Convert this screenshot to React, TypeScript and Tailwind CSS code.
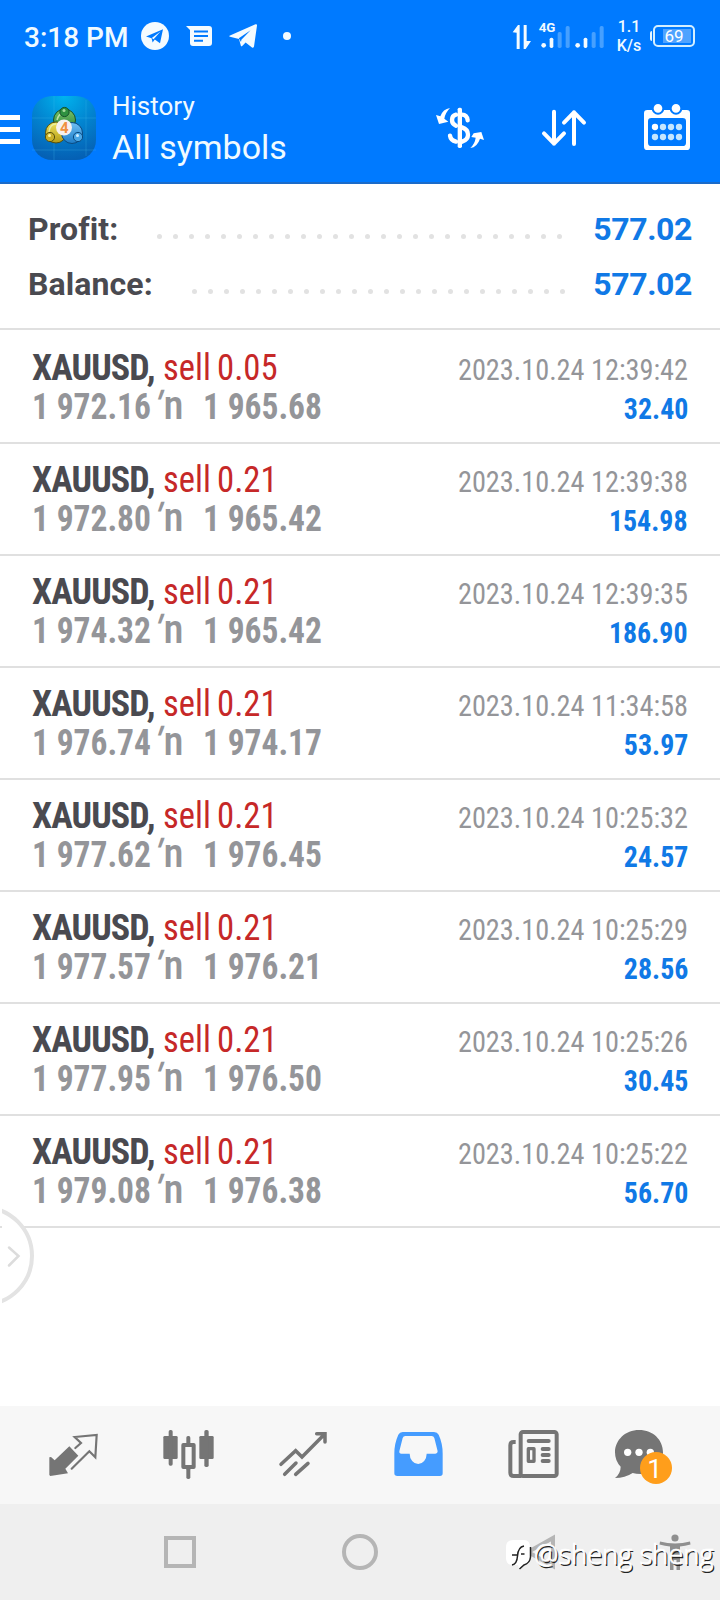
import React from "react";

interface Deal {
  volume: string;
  open: string;
  close: string;
  time: string;
  profit: string;
}

const deals: Deal[] = [
  { volume: "0.05", open: "1 972.16", close: "1 965.68", time: "2023.10.24 12:39:42", profit: "32.40" },
  { volume: "0.21", open: "1 972.80", close: "1 965.42", time: "2023.10.24 12:39:38", profit: "154.98" },
  { volume: "0.21", open: "1 974.32", close: "1 965.42", time: "2023.10.24 12:39:35", profit: "186.90" },
  { volume: "0.21", open: "1 976.74", close: "1 974.17", time: "2023.10.24 11:34:58", profit: "53.97" },
  { volume: "0.21", open: "1 977.62", close: "1 976.45", time: "2023.10.24 10:25:32", profit: "24.57" },
  { volume: "0.21", open: "1 977.57", close: "1 976.21", time: "2023.10.24 10:25:29", profit: "28.56" },
  { volume: "0.21", open: "1 977.95", close: "1 976.50", time: "2023.10.24 10:25:26", profit: "30.45" },
  { volume: "0.21", open: "1 979.08", close: "1 976.38", time: "2023.10.24 10:25:22", profit: "56.70" },
];

const StatusBar = () => (
  <div className="flex h-[72px] items-center text-[#f0faff]">
    <span className="ml-6 w-[105px] pt-[3px] whitespace-nowrap text-[28px] leading-none font-medium">3:18 PM</span>
    <svg className="ml-3 h-7 w-7" viewBox="0 0 28 28">
      <circle cx="14" cy="14" r="14" fill="#f4fbff" />
      <path d="M5 14.6 22 7.2 19 21.2 13.8 17.6 11.6 20.6 10.6 16.2Z" fill="#007aff" />
      <path d="M10.8 16 19.5 9.5 12.6 17.2" fill="#f4fbff" />
    </svg>
    <svg className="ml-[17px] h-[20px] w-[26px]" viewBox="0 0 26 20">
      <path d="M0 0H23Q26 0 26 3V17Q26 20 23 20H7Q4 20 4 17V4Z" fill="#f4fbff" />
      <path d="M8 5.5H22M8 10H22M8 14.8H17" stroke="#007aff" strokeWidth="2" />
    </svg>
    <svg className="ml-[17px] h-6 w-7" viewBox="0 0 28 24">
      <path d="M1 11.5 26.5.3Q28.2-.2 28 1.6L25 22.6Q24.6 24.4 23 23.4L16.6 18.6 13.2 22Q12 22.8 11.8 21.4L10 15 1 12.8Q-.4 12.2 1 11.5Z" fill="#f4fbff" />
      <path d="M9.8 14.2 21.6 6.2 12.4 15.8 12 18" fill="#007aff" />
    </svg>
    <div className="ml-[26px] h-2 w-2 rounded-full bg-[#f4fbff]" />

    <svg className="ml-auto h-[36px] w-[94px]" viewBox="460 54 282 108">
      <g fill="#f4fbff">
        <path d="M462 97 478 75H483V147H474V98ZM495 75H504V123H517L501 147H495Z" />
        <circle cx="555" cy="136" r="7" />
        <rect x="573" y="113" width="11" height="31" rx="5" />
        <circle cx="657" cy="136" r="7" />
        <rect x="675" y="113" width="11" height="31" rx="5" />
      </g>
      <g fill="#46a0ff">
        <rect x="597" y="96" width="12" height="48" rx="5" />
        <rect x="621" y="78" width="12" height="66" rx="5" />
        <rect x="699" y="96" width="12" height="48" rx="5" />
        <rect x="723" y="78" width="12" height="66" rx="5" />
      </g>
      <text x="540" y="95" className="font-[Roboto] text-[40px] font-bold" fill="#f0faff">4G</text>
    </svg>
    <div className="ml-[8px] w-[30px] text-center text-[16px] leading-[19px] font-medium whitespace-nowrap">
      <div>1.1</div>
      <div>K/s</div>
    </div>
    <svg className="mr-[24px] ml-[5px] h-[24px] w-[47px]" viewBox="0 0 47 24">
      <path d="M3 7Q1 7 1 9V15Q1 17 3 17Z" fill="#e6f6ff" />
      <rect x="5" y="2" width="40" height="20" rx="4" fill="none" stroke="#d4efff" strokeWidth="2" />
      <rect x="14" y="5" width="28" height="14" fill="#4fa3ff" />
      <text x="15.5" y="18.2" className="font-[Roboto] text-[17px]" fill="#fff">69</text>
    </svg>
  </div>
);

const AppLogo = () => (
  <svg className="mt-[2px] ml-3 h-16 w-16" viewBox="0 0 64 64">
    <defs>
      <radialGradient id="bg" cx="0.5" cy="0" r="1">
        <stop offset="0" stopColor="#00b4ee" />
        <stop offset="0.5" stopColor="#0284d0" />
        <stop offset="1" stopColor="#0560b4" />
      </radialGradient>
      <linearGradient id="green" x1="0" y1="0" x2="0" y2="1">
        <stop offset="0" stopColor="#7dc46a" />
        <stop offset="1" stopColor="#1f7f35" />
      </linearGradient>
      <linearGradient id="gold" x1="0" y1="0" x2="0" y2="1">
        <stop offset="0" stopColor="#f0e55c" />
        <stop offset="1" stopColor="#b39a15" />
      </linearGradient>
      <linearGradient id="sky" x1="0" y1="0" x2="0" y2="1">
        <stop offset="0" stopColor="#6fc0f4" />
        <stop offset="1" stopColor="#1c7cc8" />
      </linearGradient>
    </defs>
    <rect width="64" height="64" rx="20" fill="url(#bg)" />
    <path d="M22 0V64M54 4V60M0 22H64M0 54H64" stroke="#4dc0ee" strokeOpacity="0.25" strokeWidth="1" />
    <circle cx="32.5" cy="24" r="11" fill="url(#green)" stroke="#14502a" strokeWidth="1" />
    <circle cx="24" cy="36.5" r="10.5" fill="url(#gold)" stroke="#55500f" strokeWidth="1" />
    <circle cx="40" cy="37" r="10.5" fill="url(#sky)" stroke="#0b4a80" strokeWidth="1" />
    <path d="M25 24Q27 16 33 17M17 36Q18 28 24 28" stroke="#e9f7c8" strokeOpacity="0.7" strokeWidth="1.5" fill="none" />
    <circle cx="32.5" cy="16" r="4.6" fill="#2f9140" stroke="#14502a" strokeWidth="1" />
    <circle cx="18" cy="41" r="4.6" fill="#c9b02a" stroke="#55500f" strokeWidth="1" />
    <circle cx="46" cy="41" r="4.6" fill="#49a6e6" stroke="#0b4a80" strokeWidth="1" />
    <circle cx="32" cy="14.5" r="1.5" fill="#a7dc9c" />
    <circle cx="17.5" cy="39.5" r="1.5" fill="#fff6a0" />
    <circle cx="45.5" cy="39.5" r="1.5" fill="#d4efff" />
    <circle cx="32" cy="31.5" r="8" fill="#f6f1ee" />
    <text x="28" y="37" className="font-[Roboto] text-[15px] font-bold" fill="#f09040">4</text>
  </svg>
);

const AppBar = () => (
  <div className="flex h-[110px] items-center text-[#f0faff]">
    <div className="flex w-5 flex-col gap-[7px] pt-[5px]">
      <div className="h-[5px] bg-white" />
      <div className="h-[5px] bg-white" />
      <div className="h-[5px] bg-white" />
    </div>
    <AppLogo />
    <div className="ml-4 whitespace-nowrap">
      <div className="text-[26px] leading-[40px]">History</div>
      <div className="text-[34px] leading-[42px]">All symbols</div>
    </div>
    <svg className="mt-[2px] ml-auto h-12 w-12" viewBox="228 312 144 144" fill="none">
      <rect x="293" y="323" width="13" height="121" rx="5" fill="#fff" />
      <path d="M323 361Q321 344 306 344M288 344Q276 347 276 360Q276 372 288 377M306 382Q324 388 324 404Q324 419 306 425M288 425Q272 421 270 407" stroke="#fff" strokeWidth="13" strokeLinecap="round" />
      <path d="M270 324Q249 327 241 349L228 345 237 372 265 365 253 356Q256 338 270 324ZM331 444Q352 441 360 416L372 420 364 396 341 400 334 411 347 413Q345 430 331 444Z" fill="#fff" />
    </svg>
    <svg className="mt-[2px] ml-14 h-12 w-12" viewBox="540 312 144 144" fill="none" stroke="#fff" strokeWidth="12" strokeLinecap="round" strokeLinejoin="round">
      <path d="M582 335V431M552 400 582 431 612 400M642 432V337M612 368 642 337 672 368" />
    </svg>
    <svg className="mt-[2px] mr-[29px] ml-[55px] h-12 w-12" viewBox="849 312 144 144">
      <path fillRule="evenodd" d="M862 330H980Q990 330 990 340V440Q990 450 980 450H862Q852 450 852 440V340Q852 330 862 330ZM874 354Q864 354 864 364V428Q864 438 874 438H968Q978 438 978 428V364Q978 354 968 354Z" fill="#fff" />
      <g fill="#fff" stroke="#007aff" strokeWidth="6">
        <circle cx="894" cy="325" r="16" />
        <circle cx="948" cy="325" r="16" />
      </g>
      <g fill="#c4e6ff">
        <circle cx="885" cy="381" r="9.5" fill="#fff" />
        <circle cx="909" cy="381" r="9.5" />
        <circle cx="933" cy="381" r="9.5" />
        <circle cx="957" cy="381" r="9.5" />
        <circle cx="885" cy="411" r="9.5" />
        <circle cx="909" cy="411" r="9.5" />
        <circle cx="933" cy="411" r="9.5" />
        <circle cx="957" cy="411" r="9.5" />
      </g>
    </svg>
  </div>
);

const Dots = ({ count }: { count: number }) => (
  <div className="flex gap-[11px] pt-[15px]">
    {Array.from({ length: count }, (_, i) => (
      <div key={i} className="h-[5px] w-[5px] rounded-full bg-[#e2e2e2]" />
    ))}
  </div>
);

const Summary = () => (
  <div className="h-[146px] border-b-2 border-[#e0e0e0] pt-[17px] pr-[28px] pl-[28px] text-[32px] font-bold text-[#4a4a50]">
    <div className="flex h-[55px] items-center">
      <span className="w-[129px] tracking-[0.1px]">Profit:</span>
      <Dots count={26} />
      <span className="ml-auto tracking-[-0.4px] text-[#1079e6]">577.02</span>
    </div>
    <div className="flex h-[55px] items-center">
      <span className="w-[164px] tracking-[0.1px]">Balance:</span>
      <Dots count={24} />
      <span className="ml-auto tracking-[-0.4px] text-[#1079e6]">577.02</span>
    </div>
  </div>
);

const DealRow = ({ deal }: { deal: Deal }) => (
  <div className="h-[112px] border-b-2 border-[#e0e0e0] pt-[17px] pr-8 pl-8 font-['Roboto_Condensed'] text-[36px] leading-[39px] whitespace-nowrap">
    <div className="flex h-[39px] items-baseline">
      <span className="w-[131px] font-bold tracking-[-0.9px] text-[#4a4a50]">XAUUSD,</span>
      <span className="w-[54px] origin-left scale-x-[0.96] text-[#c62828]">sell</span>
      <span className="origin-left scale-x-[0.965] text-[#c62828]">{deal.volume}</span>
      <span className="ml-auto origin-right scale-x-[0.943] text-[30px] text-[#949599]">{deal.time}</span>
    </div>
    <div className="flex h-[39px] items-baseline font-bold text-[#949599]">
      <span className="w-[121px] origin-left scale-x-[0.93]">{deal.open}</span>
      <span className="w-[50px] text-[41px] leading-[35px] font-medium">
        <i className="mr-[4px] inline-block origin-[50%_60%] -skew-x-[18deg] text-[39px] not-italic">′</i>n
      </span>
      <span className="origin-left scale-x-[0.93]">{deal.close}</span>
      <span className="ml-auto origin-right scale-x-[0.93] text-[30px] text-[#1079e6]">{deal.profit}</span>
    </div>
  </div>
);

const TabBar = () => (
  <div className="flex h-[98px] items-center bg-[#f7f7f7] pl-4 text-[#757575]">
    <div className="flex w-[115px] justify-center">
      <svg className="h-[60px] w-[60px]" viewBox="132 75 180 180">
        <path d="M208 139 235 167 196 206 204 220 151 228 148 225V172L153 171 164 181Z" fill="currentColor" />
        <path d="M226 144 243 129 224 111 290 105 286 172 268 154 215 206" fill="none" stroke="currentColor" strokeWidth="6.5" strokeLinecap="round" />
      </svg>
    </div>
    <div className="flex w-[115px] justify-center">
      <svg className="h-[60px] w-[60px]" viewBox="477 75 180 180" fill="currentColor">
        <rect x="490" y="108" width="43" height="69" rx="4" />
        <rect x="506" y="90" width="12" height="107" rx="5" />
        <rect x="550" y="135" width="31" height="66" fill="none" stroke="currentColor" strokeWidth="12" strokeLinejoin="round" />
        <rect x="559" y="108" width="12" height="26" rx="5" />
        <rect x="559" y="203" width="12" height="34" rx="5" />
        <rect x="598" y="108" width="43" height="69" rx="4" />
        <rect x="613" y="90" width="13" height="111" rx="5" />
      </svg>
    </div>
    <div className="flex w-[115px] justify-center">
      <svg className="h-[60px] w-[60px]" viewBox="822 75 180 180" fill="none" stroke="currentColor" strokeWidth="10.5" strokeLinecap="round">
        <path d="M843 193 887 152 906 171 972 104M950 101H975V126M854 223 888 189M887 223 924 190" />
      </svg>
    </div>
    <div className="flex w-[115px] justify-center text-[#459cff]">
      <svg className="h-[60px] w-[60px]" viewBox="87 75 180 180">
        <path
          fillRule="evenodd"
          fill="currentColor"
          d="M128 96H222Q232 96 236 104Q248 130 248 160V220Q248 228 240 228H112Q103 228 103 220V160Q103 130 115 104Q119 96 128 96ZM136 108Q130 108 128 114L118 154Q117 161 124 161H149A25.5 31 0 0 0 200 161H226Q233 161 233 154L223 114Q221 108 215 108Z"
        />
      </svg>
    </div>
    <div className="flex w-[115px] justify-center">
      <svg className="h-[60px] w-[60px]" viewBox="432 75 180 180" fill="none" stroke="currentColor" strokeWidth="12" strokeLinecap="round">
        <rect x="482" y="96" width="108" height="132" rx="7" />
        <path d="M467 126H461Q451 126 451 136V218Q451 228 461 228H484" strokeLinecap="butt" />
        <path d="M506 123H566M548 147H566M548 165H566M548 183H566" />
        <rect x="505" y="146" width="17" height="38" strokeWidth="10" strokeLinejoin="round" />
      </svg>
    </div>
    <div className="flex w-[115px] justify-center">
      <svg className="h-[60px] w-[60px] overflow-visible" viewBox="777 75 180 180">
        <path d="M837 90C880 90 909 120 909 157C909 196 880 222 843 222Q827 222 818 219Q795 234 765 234Q782 220 782 200Q765 183 765 157C765 120 796 90 837 90Z" fill="currentColor" />
        <circle cx="803" cy="157" r="11" fill="#fff" />
        <circle cx="837" cy="157" r="11" fill="#fff" />
        <circle cx="871" cy="157" r="11" fill="#fff" />
        <circle cx="888" cy="204" r="48" fill="#ff9e1b" />
        <text x="884" y="235" textAnchor="middle" className="font-[Roboto] text-[80px]" fill="#fff">1</text>
      </svg>
    </div>
  </div>
);

const SystemNav = () => (
  <div className="relative flex h-24 items-center bg-[#efefef]">
    <div className="ml-[164px] h-8 w-8 border-4 border-[#b5b5b5]" />
    <div className="ml-[146px] h-9 w-9 rounded-full border-4 border-[#b5b5b5]" />
    <svg className="ml-[145px] h-9 w-8" viewBox="0 0 32 36" fill="none" stroke="#b5b5b5" strokeWidth="4">
      <path d="M30 4V32L5 18Z" />
    </svg>
    <svg className="ml-[104px] h-9 w-8" viewBox="0 0 32 36" fill="#8f8f8f">
      <circle cx="16" cy="4" r="3.6" />
      <path d="M1 7.5Q16 11.5 31 7.5L31.5 10.5Q26 12 21 12.4V36H17.5V26H14.5V36H11V12.4Q6 12 .5 10.5Z" />
    </svg>

    <div className="absolute top-[35px] left-[506px] flex items-center whitespace-nowrap text-white">
      <svg className="h-7 w-[26px] overflow-visible" viewBox="0 0 26 28">
        <path d="M7 0H18Q24 0 24 7V17Q24 22 19 24L13 28.5 12 25H7Q0 25 0 18V7Q0 0 7 0Z" fill="#fff" />
        <path d="M24.5 7V17Q24 23 18 25L13.5 29M6 25Q11 24 11.5 16Q12 7 18 6M6 15H12M15 14H18.5" fill="none" stroke="#222" strokeWidth="1.5" />
      </svg>
      <span className="ml-[2px] font-['Open_Sans'] text-[27.3px] leading-[30px] font-light [-webkit-text-stroke:0.7px_#fff] [text-shadow:1.5px_1.5px_0_#222]">@sheng sheng</span>
    </div>
  </div>
);

const App: React.FC = () => {
  return (
    <div className="relative flex h-[1600px] w-[720px] flex-col overflow-hidden bg-white font-[Roboto,sans-serif]">
      <header className="h-[184px] shrink-0 border-b-2 border-[#1b6bc9] bg-[#007aff]">
        <StatusBar />
        <AppBar />
      </header>
      <Summary />
      <main className="flex-1 pt-[2px]">
        {deals.map((deal) => (
          <DealRow key={deal.time} deal={deal} />
        ))}
      </main>
      <TabBar />
      <SystemNav />

      {/* Edge panel handle */}
      <svg className="absolute top-[1204px] left-[2px] h-[104px] w-[34px]" viewBox="2 0 34 104" fill="none">
        <circle cx="-16.5" cy="52" r="48.5" fill="#fff" stroke="#e3e3e3" strokeWidth="4" />
        <path d="M9 43.5 18.5 52 9 61.5" stroke="#dcdcdc" strokeWidth="2.5" strokeLinecap="round" />
      </svg>
    </div>
  );
};

export default App;
